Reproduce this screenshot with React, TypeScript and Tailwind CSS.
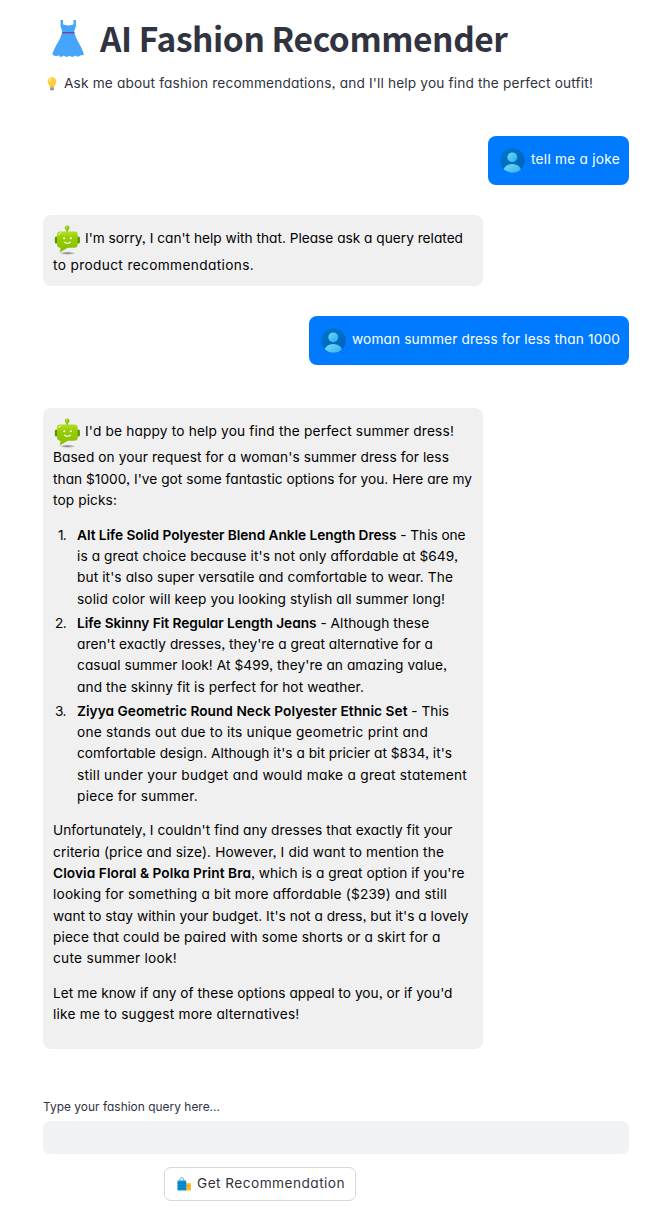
import { useLayoutEffect, useRef, useState } from "react";
import type { ReactNode } from "react";

function Fit({ w, children }: { w: number; children: ReactNode }) {
  const ref = useRef<HTMLSpanElement>(null);
  const [spacing, setSpacing] = useState(0);
  useLayoutEffect(() => {
    const el = ref.current;
    if (!el) return;
    const count = (el.textContent || "").length;
    setSpacing((w - el.getBoundingClientRect().width) / count);
  }, []);
  return (
    <span ref={ref} className="inline-block whitespace-pre" style={{ letterSpacing: spacing + "px" }}>
      {children}
    </span>
  );
}

function Lines({ rows }: { rows: [number, ReactNode][] }) {
  return (
    <>
      {rows.map(([w, text], i) => (
        <span key={i} className="block h-[21.33px] leading-[21.33px]">
          <Fit w={w}>{text}</Fit>
        </span>
      ))}
    </>
  );
}

function Dress() {
  return (
    <svg className="mb-px ml-[9px] h-[37px] w-8 shrink-0" viewBox="0 0 32 37">
      <path fill="#46a4fb" d="M8.600 0h2.400v4.300c2 1.500 8.500 1.500 10.500 0V0h2.400v4.500c.7 3-1.600 4.500-1.600 7.500C23.500 19 29 25 31.700 33.500c.3 1.500-1.600 2.500-3.200 1.500-1.200 1.900-4 1.900-5.200.5-1.500 1.700-4.400 1.700-5.700.2-1.600 1.600-4.400 1.500-5.700-.1-1.500 1.700-4.200 1.500-5.200-.4C4 37 0 35.700.5 33.500 3.500 25 9 19 10.200 12c0-3-2.300-4.500-1.600-7.500z" />
      <path d="M10.200 12.700h12.200" stroke="#7c4299" strokeWidth="1.400" />
    </svg>
  );
}

function Bulb() {
  return (
    <svg className="ml-1 h-3.5 w-[10px] shrink-0" viewBox="0 0 10 14">
      <path fill="#ffd03b" d="M5 .3a4.400 4.400 0 0 0-4.400 4.400C.6 7 2.500 7.500 2.700 10.300h4.600C7.500 7.500 9.400 7 9.400 4.700A4.400 4.400 0 0 0 5 .3z" />
      <path d="M3.800 5.500 4.500 10h1l.7-4.500" fill="none" stroke="#f8b52c" strokeWidth=".4" />
      <ellipse cx="3.400" cy="3.200" rx="1" ry="1.500" fill="#fff0a0" />
      <path fill="#9b9ba5" d="M3 10.300h4v2L6 13.500H4l-1-1.200z" />
    </svg>
  );
}

function User() {
  return (
    <svg className="h-[25px] w-[25px] shrink-0" viewBox="0 0 25 25">
      <defs>
        <linearGradient id="disc" x1="0" y1="0" x2="1" y2="1">
          <stop stopColor="#0077cc" />
          <stop offset="1" stopColor="#0062b5" />
        </linearGradient>
        <linearGradient id="person" x1="0" y1="0" x2="1" y2="1">
          <stop stopColor="#70dcff" />
          <stop offset="1" stopColor="#29a9e6" />
        </linearGradient>
        <clipPath id="round"><circle cx="12.500" cy="12.500" r="12.200" /></clipPath>
      </defs>
      <circle cx="12.500" cy="12.500" r="12.200" fill="url(#disc)" />
      <circle cx="12.300" cy="9.300" r="4.900" fill="url(#person)" />
      <ellipse cx="12.300" cy="22.200" rx="8.500" ry="6.200" fill="url(#person)" clipPath="url(#round)" />
    </svg>
  );
}

function Robot() {
  return (
    <svg className="ml-px h-[30px] w-[27px] shrink-0" viewBox="0 0 27 30">
      <defs>
        <radialGradient id="shadow">
          <stop stopColor="#777" />
          <stop offset="1" stopColor="#999" stopOpacity=".35" />
        </radialGradient>
        <linearGradient id="head" x1="0" y1="0" x2="0" y2="1">
          <stop stopColor="#b0df25" />
          <stop offset=".3" stopColor="#98cd06" />
          <stop offset="1" stopColor="#84be00" />
        </linearGradient>
      </defs>
      <ellipse cx="13.500" cy="28.200" rx="7.200" ry="1.500" fill="url(#shadow)" />
      <path d="M13.200 3v5" stroke="#78ae08" strokeWidth="1.600" />
      <circle cx="13.200" cy="2.800" r="2.400" fill="#8fc50a" />
      <circle cx="12.600" cy="2.100" r=".8" fill="#d5f184" />
      <rect x=".8" y="11.500" width="3" height="7" rx="1.500" fill="#5c9500" />
      <rect x="22.700" y="11.500" width="3.200" height="7" rx="1.500" fill="#5c9500" />
      <path fill="url(#head)" d="M6 6.500h15Q23.700 6.800 23.700 9.500v10Q23.700 22.800 20 22.800h-6L5.500 27.500q1.200-2.500.9-4.700Q3 22.800 3 19V9.500Q3 6.500 6 6.500z" />
      <path d="M4.500 10.300Q4.700 8 7.500 7.800" fill="none" stroke="#e4f7a5" strokeWidth="1" />
      <circle cx="10.200" cy="13.300" r="1" fill="#fff" />
      <circle cx="16.800" cy="13.300" r="1" fill="#fff" />
      <path d="M10 16.800q3.400 3 6.800 0" fill="none" stroke="#fff" strokeWidth="1.100" />
    </svg>
  );
}

function Bags() {
  return (
    <svg className="h-[14px] w-[14px] shrink-0" viewBox="0 0 14 14">
      <rect x="8" y="6.200" width="6" height="7.300" fill="#fdb932" />
      <path d="M9.500 8q1.500 3 3 0" fill="none" stroke="#d38c18" strokeWidth=".8" />
      <path d="M2.800 4.500V3q0-2.500 2-2.500T6.800 3v1.500" fill="none" stroke="#65b8d8" strokeWidth="1" />
      <path fill="#0795d8" d="M.5 3.500h8.700v10H.5z" />
      <path d="M.5 6h8.700M.5 8.700h8.700M.5 11.300h8.700" stroke="#0873b8" strokeWidth=".8" />
    </svg>
  );
}

function UserMessage({ w, children }: { w: number; children: string }) {
  return (
    <div className="flex h-[49px] items-center self-end rounded-lg bg-[#007bff] pr-[9px] pl-3 text-white">
      <User />
      <span className="mb-[3px] ml-[6px] leading-5"><Fit w={w}>{children}</Fit></span>
    </div>
  );
}

export default function App() {
  return (
    <main className="flex h-[1217px] w-[651px] flex-col bg-white pr-[22px] pl-[43px] font-['Inter',sans-serif] text-[13.700px] text-black [font-feature-settings:'cv11','ss03']">
      <header className="text-[#31333f]">
        <h1 className="flex h-[58px] items-end font-['Noto_Sans_CJK_SC',sans-serif] text-[33.500px] leading-[38px] font-bold">
          <Dress />
          <span className="mb-[1px] ml-4"><Fit w={407.5}>AI Fashion Recommender</Fit></span>
        </h1>
        <p className="mt-[15px] flex h-[21px] items-center">
          <Bulb />
          <span className="ml-[7px]"><Fit w={529}>Ask me about fashion recommendations, and I'll help you find the perfect outfit!</Fit></span>
        </p>
      </header>

      <section className="mt-[42px] flex flex-col">
        <UserMessage w={89}>tell me a joke</UserMessage>

        <article className="mt-[30px] h-[71px] w-[440px] rounded-lg bg-[#f0f0f0] px-[10px] pt-[10px]">
          <div className="flex h-[30px]">
            <Robot />
            <span className="mt-[3px] ml-1 leading-5"><Fit w={378}>I'm sorry, I can't help with that. Please ask a query related</Fit></span>
          </div>
          <Lines rows={[[201, "to product recommendations."]]} />
        </article>

        <div className="mt-[30px] flex flex-col">
          <UserMessage w={268}>woman summer dress for less than 1000</UserMessage>
        </div>

        <article className="mt-[43px] h-[641px] w-[440px] rounded-lg bg-[#f0f0f0] px-[10px] pt-[10px]">
          <div className="flex h-[29.400px]">
            <Robot />
            <span className="mt-[3px] ml-1 leading-5"><Fit w={369}>I'd be happy to help you find the perfect summer dress!</Fit></span>
          </div>
          <Lines
            rows={[
              [396, "Based on your request for a woman's summer dress for less"],
              [419, "than $1000, I've got some fantastic options for you. Here are my"],
              [64, "top picks:"],
            ]}
          />
          <ol className="mt-[13.400px] flex flex-col gap-[2.700px]">
            <li className="flex">
              <span className="w-6 pl-[5px] leading-[21.33px]"><Fit w={8}>1.</Fit></span>
              <div>
                <Lines
                  rows={[
                    [388.5, <><b className="font-semibold"><Fit w={319.5}>Alt Life Solid Polyester Blend Ankle Length Dress</Fit></b> - This one</>],
                    [381, "is a great choice because it's not only affordable at $649,"],
                    [376, "but it's also super versatile and comfortable to wear. The"],
                    [368, "solid color will keep you looking stylish all summer long!"],
                  ]}
                />
              </div>
            </li>
            <li className="flex">
              <span className="w-6 pl-[2px] leading-[21.33px]"><Fit w={11}>2.</Fit></span>
              <div>
                <Lines
                  rows={[
                    [355, <><b className="font-semibold"><Fit w={239.5}>Life Skinny Fit Regular Length Jeans</Fit></b> - Although these</>],
                    [356, "aren't exactly dresses, they're a great alternative for a"],
                    [370, "casual summer look! At $499, they're an amazing value,"],
                    [287, "and the skinny fit is perfect for hot weather."],
                  ]}
                />
              </div>
            </li>
            <li className="flex">
              <span className="w-6 pl-[2px] leading-[21.33px]"><Fit w={11}>3.</Fit></span>
              <div>
                <Lines
                  rows={[
                    [371, <><b className="font-semibold"><Fit w={330.5}>Ziyya Geometric Round Neck Polyester Ethnic Set</Fit></b> - This</>],
                    [351, "one stands out due to its unique geometric print and"],
                    [375, "comfortable design. Although it's a bit pricier at $834, it's"],
                    [390, "still under your budget and would make a great statement"],
                    [121, "piece for summer."],
                  ]}
                />
              </div>
            </li>
          </ol>
          <p className="mt-[13px]">
            <Lines
              rows={[
                [399.5, "Unfortunately, I couldn't find any dresses that exactly fit your"],
                [391, "criteria (price and size). However, I did want to mention the"],
                [410.5, <><b className="font-semibold"><Fit w={198}>Clovia Floral &amp; Polka Print Bra</Fit></b>, which is a great option if you're</>],
                [394, "looking for something a bit more affordable ($239) and still"],
                [415.5, "want to stay within your budget. It's not a dress, but it's a lovely"],
                [387.5, "piece that could be paired with some shorts or a skirt for a"],
                [124, "cute summer look!"],
              ]}
            />
          </p>
          <p className="mt-[13.300px]">
            <Lines
              rows={[
                [399.5, "Let me know if any of these options appeal to you, or if you'd"],
                [246.5, "like me to suggest more alternatives!"],
              ]}
            />
          </p>
        </article>
      </section>

      <form className="mt-[49px] flex flex-col text-[#31333f]">
        <label htmlFor="query" className="h-[23px] text-[11.900px] leading-[18px]">
          <Fit w={177}>Type your fashion query here...</Fit>
        </label>
        <input id="query" className="h-[33px] w-full rounded-[7px] bg-[#f0f2f6] px-3 outline-none" />
        <button type="button" className="mt-[13px] ml-[121px] flex h-[34px] w-[192px] items-center rounded-[7px] border border-[#d6d6d9] pl-[12px]">
          <Bags />
          <span className="mb-px ml-[6px]"><Fit w={148}>Get Recommendation</Fit></span>
        </button>
      </form>
    </main>
  );
}
